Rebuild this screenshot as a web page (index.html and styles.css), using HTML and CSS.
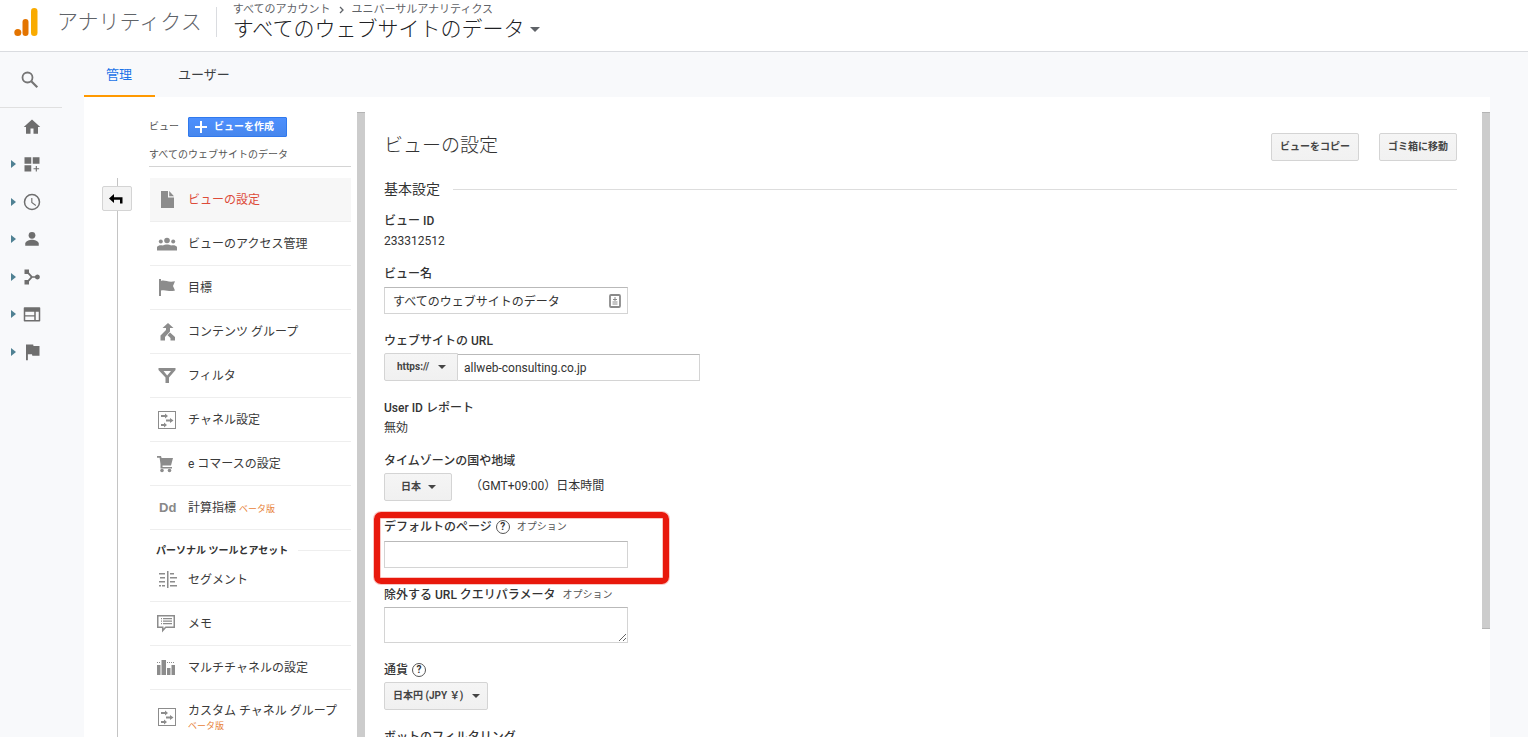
FILE: index.html
```html
<!DOCTYPE html>
<html lang="ja">
<head>
<meta charset="utf-8">
<title>アナリティクス - ビューの設定</title>
<link rel="stylesheet" href="styles.css">
</head>
<body>
<header class="topbar">
  <svg class="logo" viewBox="0 0 26 30" aria-hidden="true"><rect x="17" y="1" width="6.500" height="28" rx="3.250" fill="#f9ab00"/><rect x="8.500" y="12" width="6" height="17" rx="3" fill="#e37400"/><circle cx="3.800" cy="25.500" r="3.500" fill="#e37400"/></svg>
  <span class="product">アナリティクス</span>
  <div class="account">
    <div class="crumbs"><span>すべてのアカウント</span><svg class="crumb-arrow" viewBox="0 0 5 8" aria-hidden="true"><path d="M1 1l3 3-3 3" fill="none" stroke="#5f6368" stroke-width="1.300"/></svg><span>ユニバーサルアナリティクス</span></div>
    <button class="view-picker" type="button">すべてのウェブサイトのデータ<span class="caret"></span></button>
  </div>
</header>
<div class="shell">
  <nav class="sidenav" aria-label="メイン">
    <button class="search" type="button" aria-label="検索"><svg viewBox="0 0 18 18" aria-hidden="true"><circle cx="6.500" cy="6.500" r="5" fill="none" stroke="#757575" stroke-width="1.800"/><path d="M10.300 10.300l6 6" stroke="#757575" stroke-width="2.200"/></svg></button>
    <ul class="nav-list">
      <li><a href="#" aria-label="ホーム"><i class="blank"></i><svg viewBox="0 0 24 24"><path d="M10 21v-7h4v7h6v-9h3L12 2 1 12h3v9z"/></svg></a></li>
      <li><a href="#" aria-label="カスタム"><i class="expand"></i><svg viewBox="0 0 24 24"><path d="M2 3h9v8.500H2zM13 3h9v8.500h-9zM2 13.500h9V22H2zM17 14.500h1.500v3h3V19h-3v3H17v-3h-3v-1.500h3z"/></svg></a></li>
      <li><a href="#" aria-label="リアルタイム"><i class="expand"></i><svg viewBox="0 0 24 24"><path d="M12 1a11 11 0 1 0 0 22 11 11 0 0 0 0-22zm0 20a9 9 0 1 1 0-18 9 9 0 0 1 0 18zM12.500 6.500H11v6.500l5.700 4.200.8-1.300-5-3.600z"/></svg></a></li>
      <li><a href="#" aria-label="ユーザー"><i class="expand"></i><svg viewBox="0 0 24 24"><circle cx="12" cy="7" r="4.500"/><path d="M3 21v-3c0-3 6-5 9-5s9 2 9 5v3z"/></svg></a></li>
      <li><a href="#" aria-label="集客"><i class="expand"></i><svg viewBox="0 0 24 24"><path d="M2 2h6v4l4.500 5H16a3.300 3.300 0 1 1 0 2h-3.500L8 18v4H2v-6h4.500l3.700-4L6.500 8H2z"/></svg></a></li>
      <li><a href="#" aria-label="行動"><i class="expand"></i><svg viewBox="0 0 24 24"><path d="M2 3h20a1 1 0 0 1 1 1v17a1 1 0 0 1-1 1H2a1 1 0 0 1-1-1V4a1 1 0 0 1 1-1zm1 6v4.500h12V9zm0 6.200V20h12v-4.800zM17 9v11h4V9z" fill-rule="evenodd"/></svg></a></li>
      <li><a href="#" aria-label="コンバージョン"><i class="expand"></i><svg viewBox="0 0 24 24"><path d="M14 4l-.4-2H4v21h2.500v-8H12l.4 2H22V4z"/></svg></a></li>
    </ul>
  </nav>
  <div class="page">
    <nav class="tabs" aria-label="設定"><a class="tab active" href="#">管理</a><a class="tab" href="#">ユーザー</a></nav>
    <div class="card">
      <div class="rail"><button class="back" type="button" aria-label="戻る"><svg viewBox="0 0 14 10" aria-hidden="true"><path d="M0 4.500L5 0v3.200h8.500V9.500H11V5.800H5V9z"/></svg></button></div>
      <section class="column">
        <div class="column-head">
          <div class="create-row"><span>ビュー</span><button class="create" type="button"><svg viewBox="0 0 12 12" aria-hidden="true"><path d="M6 0v12M0 6h12" stroke="#fff" stroke-width="2"/></svg>ビューを作成</button></div>
          <div class="view-name">すべてのウェブサイトのデータ</div>
        </div>
        <ul class="menu">
          <li><a class="selected" href="#"><svg viewBox="0 0 20 20"><path d="M4 1h7v6.500h6V18H4zM12.200 1L17 6.300h-4.800z"/></svg><span>ビューの設定</span></a></li>
          <li><a href="#"><svg viewBox="0 0 20 20"><circle cx="10" cy="6.500" r="2.800"/><circle cx="3.800" cy="7.500" r="2"/><circle cx="16.200" cy="7.500" r="2"/><path d="M0 16.500v-3.500C1 11 4 10.800 6 11.500c2-1.300 6-1.300 8 0 2-.7 5-.5 6 1.500v3.500z"/></svg><span>ビューのアクセス管理</span></a></li>
          <li><a href="#"><svg viewBox="0 0 20 20"><path d="M2 1h2v2c4-1.500 7 2 14 .3L16 8l2 4.500c-6 1.800-9-1.300-14 0V18H2z"/></svg><span>目標</span></a></li>
          <li><a href="#"><svg viewBox="0 0 20 20"><path d="M11 1l5.500 5H13v3.500l-5 5.500v3.500H3.500v-5L9 8V6H5.500zM13 10.500l5 4.500v3.500h-4.500V16L10.500 13.300z"/></svg><span>コンテンツ グループ</span></a></li>
          <li><a href="#"><svg viewBox="0 0 20 20"><path d="M1.500 2h17v2l-6.500 7.500V17H8.500v-5.500L1.500 4zm5 3l3.700 4.500L14 5z" fill-rule="evenodd"/></svg><span>フィルタ</span></a></li>
          <li><a href="#"><svg viewBox="0 0 20 20"><path d="M1 1h18v18H1zm1 1v16h16V2zM4 5h4V3.500L11 6 8 8.500V7H4zM9 9.500h4V8l3.500 2.500L13 13v-1.500H9zM4 14h3v-1.500l3 2.500-3 2.500V16H4z" fill-rule="evenodd"/></svg><span>チャネル設定</span></a></li>
          <li><a href="#"><svg viewBox="0 0 20 20"><path d="M0 2h4l.6 2H16l-2 7.500H5.500V13H15v1.500H3.500V10L2.600 3.700H0z"/><circle cx="5" cy="16.500" r="1.800"/><circle cx="12.500" cy="16.500" r="1.800"/></svg><span>e コマースの設定</span></a></li>
          <li><a href="#"><b class="dd">Dd</b><span>計算指標 <small>ベータ版</small></span></a></li>
        </ul>
        <h2 class="group">パーソナル ツールとアセット</h2>
        <ul class="menu">
          <li><a href="#"><svg viewBox="0 0 20 20"><path d="M2 3h6v1.600H2zM3 7h5v1.600H3zM2 11h6v1.600H2zM2 15h2v1.600H2zM5 15h3v1.600H5zM10 1h1.500v17H10zM13 3h4v1.600h-4zM13 7h7v1.600h-7zM13 11h5v1.600h-5zM13 15h7v1.600h-7z"/></svg><span>セグメント</span></a></li>
          <li><a href="#"><svg viewBox="0 0 20 20"><path d="M0 1h18v13H9l-4 4.500V14H0zm1.500 1.500v10h5v2l2-2h8v-10zM4 4h1v1.200H4zM6 4h9v1.200H6zM4 6.500h1v1.200H4zM6 6.500h9v1.200H6zM4 9h1v1.200H4zM6 9h9v1.200H6z" fill-rule="evenodd"/></svg><span>メモ</span></a></li>
          <li><a href="#"><svg viewBox="0 0 20 20"><path d="M0 7h3.500v10H0zM4.500 2H9v15H4.500zM10 10h3.500v7H10zM14.500 7H18v10h-3.500zM0 4h1v1H0zM2 4h1v1H2zM10 4h1v1h-1zM12 4h1v1h-1zM14 4h1v1h-1zM16 4h1v1h-1z"/></svg><span>マルチチャネルの設定</span></a></li>
          <li><a class="tall" href="#"><svg viewBox="0 0 20 20"><path d="M1 1h18v18H1zm1 1v16h16V2zM4 5h4V3.500L11 6 8 8.500V7H4zM9 9.500h4V8l3.500 2.500L13 13v-1.500H9zM4 14h3v-1.500l3 2.500-3 2.500V16H4z" fill-rule="evenodd"/></svg><span>カスタム チャネル グループ<small class="below">ベータ版</small></span></a></li>
        </ul>
      </section>
      <div class="scrollbar"></div>
      <main class="settings">
        <div class="title-row"><h1>ビューの設定</h1><div class="actions"><button class="btn" type="button">ビューをコピー</button><button class="btn" type="button">ゴミ箱に移動</button></div></div>
        <h2 class="section">基本設定</h2>
        <form>
          <div class="field"><div class="label">ビュー ID</div><div class="value">233312512</div></div>
          <div class="field"><label class="label" for="name">ビュー名</label>
            <div class="control name-box"><input id="name" type="text" value="すべてのウェブサイトのデータ"><svg viewBox="0 0 12 14" aria-hidden="true"><rect x="1" y="1" width="10" height="12" rx="1" fill="#fff" stroke="#8a8a8a" stroke-width="1.800"/><path d="M6 3v4M4 5.500h4M3.500 8h5M3.500 10h5" stroke="#8a8a8a" fill="none"/></svg></div></div>
          <div class="field"><label class="label" for="url">ウェブサイトの URL</label>
            <div class="control url"><span class="drop protocol"><select aria-label="プロトコル"><option>https://</option></select></span><input id="url" type="text" value="allweb-consulting.co.jp"></div></div>
          <div class="field"><div class="label">User ID レポート</div><div class="value">無効</div></div>
          <div class="field"><label class="label" for="tz">タイムゾーンの国や地域</label>
            <div class="control zone"><span class="drop country"><select id="tz"><option>日本</option></select></span><span>（GMT+09:00）日本時間</span></div></div>
          <div class="field highlight"><div class="label"><label for="page">デフォルトのページ</label><button class="help" type="button" aria-label="ヘルプ">?</button><span class="optional">オプション</span></div>
            <div class="control"><input id="page" type="text"></div></div>
          <div class="field"><div class="label"><label for="query">除外する URL クエリパラメータ</label><span class="optional">オプション</span></div>
            <div class="control"><textarea id="query"></textarea></div></div>
          <div class="field"><div class="label"><label for="currency">通貨</label><button class="help" type="button" aria-label="ヘルプ">?</button></div>
            <div class="control"><span class="drop currency"><select id="currency"><option>日本円 (JPY ￥)</option></select></span></div></div>
          <div class="field"><div class="label">ボットのフィルタリング</div></div>
        </form>
      </main>
      <div class="scrollbar short"></div>
    </div>
  </div>
</div>
</body>
</html>
```

FILE: styles.css
```css
*, *::before, *::after { box-sizing: border-box; }
body { margin: 0; height: 100vh; display: flex; flex-direction: column; overflow: hidden; background: #f8f9fb; color: #333; font: 12px/20px Roboto, "Noto Sans CJK JP", sans-serif; }
a { color: inherit; text-decoration: none; }
button, input, select, textarea { font: inherit; color: inherit; margin: 0; }
button { cursor: pointer; }
ul { list-style: none; margin: 0; padding: 0; }
h1, h2 { margin: 0; font-weight: 400; }
svg { display: block; flex: none; }

.topbar { flex: none; display: flex; height: 52px; padding-left: 14px; background: #fff; border-bottom: 1px solid #dadce0; }
.logo { width: 26px; height: 30px; margin-top: 7px; }
.product { margin-left: 17px; font-size: 21px; line-height: 44px; font-weight: 300; color: #5f6368; }
.account { margin: 7px 0 14px 14px; padding-left: 16px; border-left: 1px solid #dadce0; }
.crumbs { display: flex; align-items: center; gap: 8px; height: 12px; margin-top: -3px; font-size: 11px; line-height: 12px; color: #5f6368; }
.crumb-arrow { width: 5px; height: 8px; }
.view-picker { display: flex; align-items: center; gap: 6px; padding: 0; border: 0; background: none; font-size: 21px; line-height: 26px; font-weight: 300; color: #202124; }
.caret { border: 5px solid transparent; border-top-color: #5f6368; border-bottom: 0; }

.shell { flex: 1; min-height: 0; display: flex; }
.sidenav { flex: none; width: 62px; }
.search { display: flex; align-items: center; justify-content: center; width: 100%; height: 56px; padding: 0; border: 0; border-bottom: 1px solid #e0e0e0; background: none; }
.search svg { width: 18px; height: 18px; margin-right: 2px; }
.nav-list { display: flex; flex-direction: column; justify-content: space-between; height: 262px; }
.nav-list a { display: flex; align-items: center; gap: 7px; height: 37px; padding-left: 11px; }
.nav-list svg { width: 18px; height: 18px; fill: #6e6e6e; }
.expand { border: 4px solid transparent; border-left: 5px solid #4f8193; border-right: 0; }
.expand, .blank { width: 5px; }

.page { flex: 1; min-width: 0; display: flex; flex-direction: column; margin: 0 38px 0 22px; }
.tabs { flex: none; display: flex; height: 45px; font-size: 13px; line-height: 45px; color: #3c4043; }
.tab { padding: 0 23px; }
.tab.active { padding-left: 22px; color: #1a73e8; border-bottom: 2px solid #f90; }
.card { flex: 1; min-height: 0; display: flex; background: #fff; overflow: hidden; }

.rail { position: relative; flex: none; width: 1px; margin: 81px 31px 0 33px; background: #c4c4c4; }
.back { position: absolute; top: 8px; left: -15px; display: flex; align-items: center; justify-content: center; width: 30px; height: 25px; padding: 0 2px 0 0; border: 1px solid #d4d4d4; border-radius: 2px; background: #f3f3f3; }
.back svg { width: 14px; height: 10px; }

.column { flex: none; width: 202px; margin-right: 6px; }
.column-head { padding-top: 20px; margin-bottom: 11px; border-bottom: 1px solid #d4d4d4; font-size: 10px; color: #555; }
.create-row { display: flex; gap: 9px; }
.create { display: flex; align-items: center; gap: 7px; height: 20px; padding: 0 12px 0 6px; border: 1px solid #3079ed; border-radius: 1px; background: linear-gradient(#4d90fe, #4787ed); color: #fff; font-weight: 700; line-height: 18px; }
.create svg { width: 12px; height: 12px; }
.view-name { margin-top: 8px; padding-bottom: 1px; }
.menu { margin-left: 1px; }
.menu a { display: flex; align-items: center; gap: 11px; height: 44px; padding-left: 7px; border-bottom: 1px solid #eee; line-height: 18px; color: #3a3a3a; }
.menu svg { width: 20px; height: 20px; fill: #8c8c8c; }
.menu .selected { background: #f7f7f7; color: #dd4b39; }
.menu .tall { height: 54px; }
.dd { width: 20px; padding-left: 2px; font: 700 13px/18px "Liberation Sans", sans-serif; color: #888; }
.menu small { font-size: 9px; line-height: 12px; color: #e8833a; }
.menu .below { display: block; }
.group { display: flex; align-items: center; gap: 10px; height: 28px; padding: 13px 0 0 7px; font-size: 10px; line-height: 16px; font-weight: 700; white-space: nowrap; }
.group::after { content: ""; flex: 1; height: 1px; background: #eee; }
.scrollbar { flex: none; width: 8px; margin-top: 15px; background: #ccc; border-top: 1px solid #b4b4b4; }
.scrollbar.short { height: 517px; border-bottom: 1px solid #b4b4b4; }

.settings { flex: 1; min-width: 0; padding: 34px 25px 0 19px; }
.title-row { display: flex; justify-content: space-between; height: 45px; }
h1 { font-size: 19px; line-height: 30px; font-weight: 300; }
.actions { display: flex; gap: 20px; padding-top: 2px; }
.btn { height: 28px; padding: 0 8px; border: 1px solid #d4d4d4; border-radius: 2px; background: linear-gradient(#f5f5f5, #f1f1f1); color: #444; font-size: 10px; line-height: 26px; font-weight: 700; }
.section { display: flex; align-items: center; gap: 13px; margin-bottom: 12px; padding-top: 3px; font-size: 14px; line-height: 20px; }
.section::after { content: ""; flex: 1; height: 1px; background: #ddd; }

.field { position: relative; margin-bottom: 13px; }
.field:has(.control) { margin-bottom: 17px; }
.label { display: flex; align-items: center; font-weight: 500; line-height: 20px; }
.control { display: flex; margin-top: 2px; }
.control input, .control textarea { width: 244px; height: 27px; padding: 0 6px; border: 1px solid #d4d4d4; border-top-color: #b9b9b9; border-radius: 0; background: #fff; }
.control textarea { height: 36px; resize: both; }
.name-box { align-items: center; padding-top: 1px; }
.control #name { padding: 0 30px 0 8px; }
.name-box svg { width: 12px; height: 14px; margin-left: -19px; }
.url { align-items: flex-end; }
.control #url { width: 242px; border-left: 0; }
.drop { position: relative; }
.drop::after { content: ""; position: absolute; top: 12px; right: 12px; border: 4px solid transparent; border-top-color: #444; border-bottom: 0; pointer-events: none; }
.drop select { display: block; appearance: none; width: 100%; height: 28px; border: 1px solid #d4d4d4; border-radius: 2px; background: linear-gradient(#f5f5f5, #f0f0f0); color: #444; font-size: 10px; font-weight: 700; }
.protocol { width: 74px; }
.protocol select { padding: 0 12px; border-radius: 2px 0 0 2px; }
.country { width: 68px; }
.country::after { right: 16px; }
.country select { padding: 0 16px; }
.currency { width: 104px; }
.currency::after { right: 8px; }
.currency select { padding: 0 8px; }
.zone { align-items: flex-start; gap: 18px; line-height: 26px; }
.help { width: 14px; height: 14px; margin-left: 4px; padding: 0; border: 1px solid #555; border-radius: 50%; background: #fff; font-size: 10px; line-height: 12px; font-weight: 700; text-align: center; }
.optional { margin-left: 7px; font-size: 10px; font-weight: 400; color: #555; }
.highlight { margin-top: -1px; }
.highlight .control { margin-top: 4px; }
.highlight::after { content: ""; position: absolute; top: -5px; left: -10px; width: 295px; height: 72px; border: 6px solid #e8180c; border-radius: 7px; box-shadow: 0 0 0 1px #fac5c2, inset 0 0 0 1px #fac5c2; pointer-events: none; }
```
